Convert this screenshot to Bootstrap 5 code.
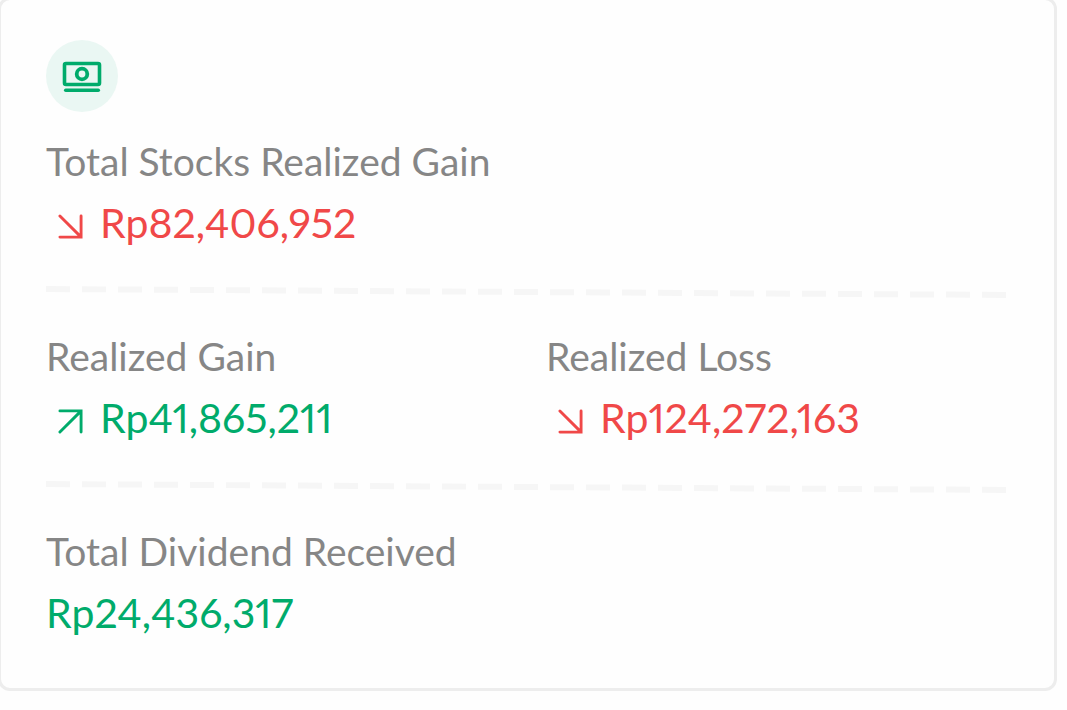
<!DOCTYPE html>
<html lang="en">
<head>
<meta charset="utf-8">
<meta name="viewport" content="width=device-width, initial-scale=1">
<title>Realized Gain</title>
<link href="https://cdn.jsdelivr.net/npm/bootstrap@5.3.0/dist/css/bootstrap.min.css" rel="stylesheet">
<style>
  :root { --gain: #00ab6b; --fall: #f04848; --muted: #868686; }
  body { font-family: Lato, "Open Sans", sans-serif; background: #fefefe; overflow-x: hidden; }
  .gain-card { margin: -3px 10px 0 -2px; padding: 40px 48px 47px 45px; border: 3px solid #ededed; border-radius: 12px; background: #fefefe; }
  .icon-disc { width: 72px; height: 72px; margin-bottom: 27px; background: #eaf7f3; color: var(--gain); }
  .stat-label { margin: 0; font-size: 39px; line-height: 44px; font-weight: 400; color: var(--muted); }
  .stat-value { margin: 12px 0 0; font-size: 41px; line-height: 56px; font-variant-numeric: proportional-nums; }
  .trend { width: 25px; height: 25px; margin: 6px 17px 0 12px; }
  .is-gain { color: var(--gain); }
  .is-fall { color: var(--fall); }
  .dash-rule { height: 12px; margin: 35px 0 36px; }
  .pair { --bs-gutter-x: 40px; }
</style>
</head>
<body>
<main class="gain-card">
  <div class="icon-disc rounded-circle d-flex align-items-center justify-content-center">
    <svg width="40" height="32" viewBox="0 0 40 32" fill="none" stroke="currentColor" aria-hidden="true">
      <rect x="2.5" y="3.5" width="35" height="21" rx="1.5" stroke-width="3.6"/>
      <circle cx="20" cy="14" r="5.3" stroke-width="3.8"/>
      <path d="M3.7 30.2h32.6" stroke-width="3.5" stroke-linecap="round"/>
    </svg>
  </div>

  <section>
    <h2 class="stat-label">Total Stocks Realized Gain</h2>
    <p class="stat-value is-fall d-flex align-items-center">
      <svg class="trend flex-shrink-0" viewBox="0 0 26 26" fill="none" stroke="currentColor" stroke-width="3" stroke-linecap="round" aria-hidden="true"><path d="M2 2l21 21M2 24h22V2"/></svg>
      <span>Rp82,406,952</span>
    </p>
  </section>

  <svg class="dash-rule d-block w-100" aria-hidden="true"><line x1="0" y1="3" x2="100%" y2="9" stroke="#f6f6f6" stroke-width="6" stroke-dasharray="24 12"/></svg>

  <div class="row pair">
    <section class="col-6">
      <h2 class="stat-label">Realized Gain</h2>
      <p class="stat-value is-gain d-flex align-items-center">
        <svg class="trend flex-shrink-0" viewBox="0 0 26 26" fill="none" stroke="currentColor" stroke-width="3" stroke-linecap="round" aria-hidden="true"><path d="M2 24L23 3M2 2h22v22"/></svg>
        <span>Rp41,865,211</span>
      </p>
    </section>
    <section class="col-6">
      <h2 class="stat-label">Realized Loss</h2>
      <p class="stat-value is-fall d-flex align-items-center">
        <svg class="trend flex-shrink-0" viewBox="0 0 26 26" fill="none" stroke="currentColor" stroke-width="3" stroke-linecap="round" aria-hidden="true"><path d="M2 2l21 21M2 24h22V2"/></svg>
        <span>Rp124,272,163</span>
      </p>
    </section>
  </div>

  <svg class="dash-rule d-block w-100" aria-hidden="true"><line x1="0" y1="3" x2="100%" y2="9" stroke="#f6f6f6" stroke-width="6" stroke-dasharray="24 12"/></svg>

  <section>
    <h2 class="stat-label">Total Dividend Received</h2>
    <p class="stat-value is-gain">Rp24,436,317</p>
  </section>
</main>
<script src="https://cdn.jsdelivr.net/npm/bootstrap@5.3.0/dist/js/bootstrap.bundle.min.js"></script>
</body>
</html>
